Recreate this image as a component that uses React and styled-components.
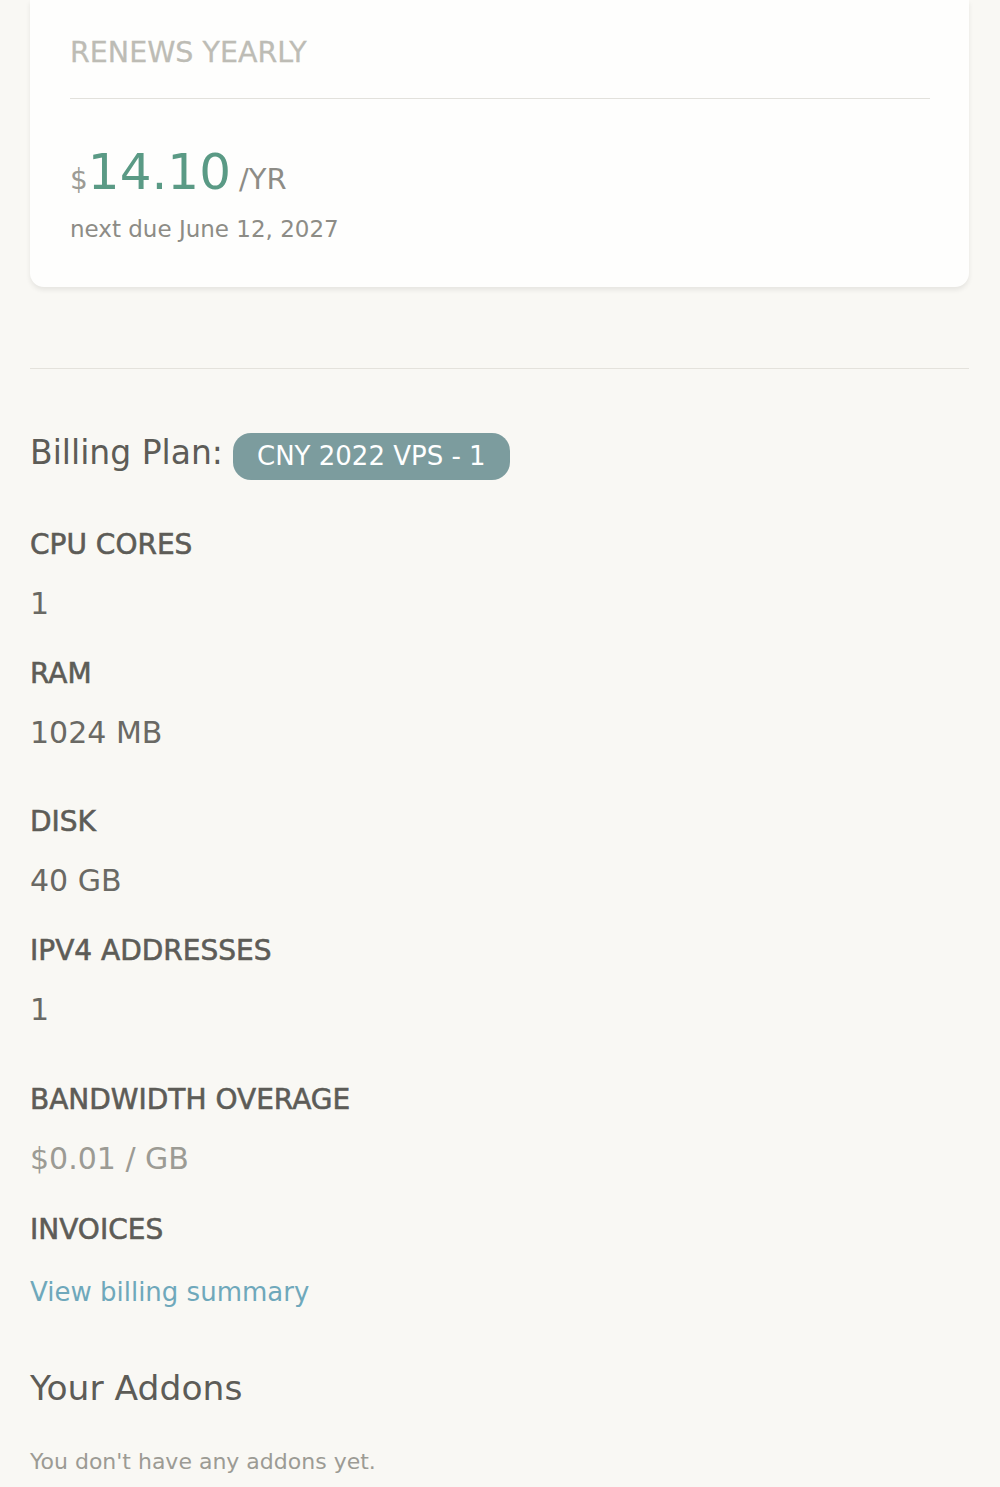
import styled, { createGlobalStyle } from "styled-components";

const GlobalStyle = createGlobalStyle`
  body {
    margin: 0;
    background: #f9f8f4;
    font-family: "DejaVu Sans", "Open Sans", sans-serif;
    color: #5d5c57;
  }
`;

const Page = styled.div`
  padding: 0 31px 24px 30px;
`;

const Card = styled.div`
  background: #fefefd;
  border-radius: 0 0 14px 14px;
  box-shadow: 0 3px 5px rgba(0, 0, 0, 0.08);
  padding: 33px 39px 42px 40px;
`;

const CardTitle = styled.div`
  font-size: 28.5px;
  line-height: 40px;
  color: #bdbcb5;
  text-transform: uppercase;
  -webkit-text-stroke: 0.3px #bdbcb5;
`;

const CardRule = styled.hr`
  border: none;
  border-top: 1.5px solid #e2e1dc;
  margin: 25px 0 0;
`;

const PriceRow = styled.div`
  display: flex;
  align-items: baseline;
  margin-top: 43px;
  line-height: 60px;
`;

const Currency = styled.span`
  font-size: 28px;
  color: #9c9b95;
`;

const Amount = styled.span`
  font-size: 50px;
  color: #5a9a85;
`;

const Period = styled.span`
  font-size: 29px;
  color: #8d8c86;
  margin-left: 8px;
`;

const DueDate = styled.div`
  font-size: 23px;
  line-height: 32px;
  margin-top: 3px;
  color: #8d8c86;
`;

const Divider = styled.hr`
  border: none;
  border-top: 1.5px solid #e4e2dc;
  margin: 81px 0 0;
`;

const PlanRow = styled.div`
  display: flex;
  align-items: flex-start;
  gap: 10px;
  margin-top: 60px;
`;

const PlanLabel = styled.span`
  font-size: 33px;
  line-height: 48px;
  color: #5d5c57;
`;

const Badge = styled.span`
  display: inline-flex;
  align-items: center;
  height: 47px;
  padding: 0 24px 2px;
  box-sizing: border-box;
  margin-top: 4px;
  border-radius: 18px;
  background: #7c9c9e;
  color: #fff;
  font-size: 26px;
`;

const Spec = styled.div`
  margin-top: ${(p) => p.$gap}px;
`;

const SpecLabel = styled.div`
  font-size: 28px;
  line-height: 36px;
  color: #5d5c57;
  text-transform: uppercase;
  -webkit-text-stroke: 0.6px #5d5c57;
`;

const SpecValue = styled.div`
  font-size: 30px;
  line-height: 40px;
  margin-top: 21px;
  color: ${(p) => (p.$muted ? "#9c9b94" : "#6a6964")};
`;

const Link = styled.a`
  display: block;
  font-size: 26px;
  line-height: 40px;
  margin-top: 24px;
  color: #6fa8bb;
  text-decoration: none;
`;

const SectionTitle = styled.h2`
  margin: 52px 0 0;
  font-size: 34.5px;
  line-height: 48px;
  font-weight: 400;
  color: #5d5c57;
`;

const Empty = styled.p`
  margin: 34px 0 0;
  font-size: 22px;
  line-height: 32px;
  color: #9c9b94;
`;

const specs = [
  { label: "CPU Cores", value: "1", gap: 47 },
  { label: "RAM", value: "1024 MB", gap: 32 },
  { label: "Disk", value: "40 GB", gap: 51 },
  { label: "IPv4 Addresses", value: "1", gap: 32 },
  { label: "Bandwidth Overage", value: "$0.01 / GB", gap: 52, muted: true },
];

export default function App() {
  return (
    <Page>
      <GlobalStyle />
      <Card>
        <CardTitle>Renews Yearly</CardTitle>
        <CardRule />
        <PriceRow>
          <Currency>$</Currency>
          <Amount>14.10</Amount>
          <Period>/YR</Period>
        </PriceRow>
        <DueDate>next due June 12, 2027</DueDate>
      </Card>

      <Divider />

      <PlanRow>
        <PlanLabel>Billing Plan:</PlanLabel>
        <Badge>CNY 2022 VPS - 1</Badge>
      </PlanRow>

      {specs.map((s) => (
        <Spec key={s.label} $gap={s.gap}>
          <SpecLabel>{s.label}</SpecLabel>
          <SpecValue $muted={s.muted}>{s.value}</SpecValue>
        </Spec>
      ))}

      <Spec $gap={33}>
        <SpecLabel>Invoices</SpecLabel>
        <Link href="#">View billing summary</Link>
      </Spec>

      <SectionTitle>Your Addons</SectionTitle>
      <Empty>You don't have any addons yet.</Empty>
    </Page>
  );
}
